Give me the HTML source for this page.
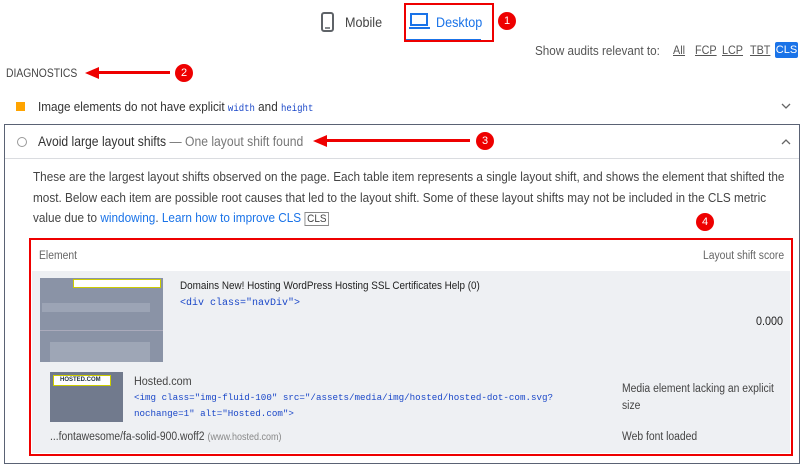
<!DOCTYPE html>
<html><head><meta charset="utf-8"><style>
*{margin:0;padding:0;box-sizing:border-box}
body{width:805px;height:470px;background:#fff;font-family:"Liberation Sans",sans-serif;color:#202124;position:relative;overflow:hidden}
.a{position:absolute;white-space:nowrap}
.n{transform:scaleX(.9);transform-origin:0 0}
.mono{font-family:"Liberation Mono",monospace;color:#1a47c8;font-size:10px}
.num{position:absolute;width:18px;height:18px;border-radius:50%;background:#e00;color:#fff;font-size:11px;text-align:center;line-height:18px}
.arr{position:absolute;height:3px;background:#e00}
.head{position:absolute;width:0;height:0;border-top:6px solid transparent;border-bottom:6px solid transparent;border-right:14px solid #e00}
.link{text-decoration:underline;color:#555;font-size:12px}
</style></head><body>
<svg class="a" style="left:321px;top:12px" width="13" height="20"><rect x="1" y="1" width="11" height="18" rx="2" fill="none" stroke="#5f6368" stroke-width="2"/><line x1="4" y1="16" x2="9" y2="16" stroke="#5f6368" stroke-width="1.5"/></svg>
<div class="a n" style="left:345px;top:14px;font-size:14px;color:#444">Mobile</div>
<svg class="a" style="left:409px;top:13px" width="21" height="17"><rect x="2" y="1" width="16" height="11" fill="none" stroke="#1a73e8" stroke-width="2"/><line x1="0" y1="15" x2="21" y2="15" stroke="#1a73e8" stroke-width="2"/></svg>
<div class="a n" style="left:436px;top:14px;font-size:14px;color:#1a73e8">Desktop</div>
<div class="a" style="left:406px;top:39px;width:75px;height:2px;background:#1a73e8"></div>
<div class="a" style="left:404px;top:3px;width:90px;height:39px;border:2px solid #e00"></div>
<div class="num" style="left:498px;top:12px">1</div>
<div class="a n" style="left:535px;top:43px;font-size:13px;color:#555">Show audits relevant to:</div>
<div class="a link n" style="left:673px;top:43px">All</div>
<div class="a link n" style="left:695px;top:43px">FCP</div>
<div class="a link n" style="left:722px;top:43px">LCP</div>
<div class="a link n" style="left:750px;top:43px">TBT</div>
<div class="a" style="left:775px;top:42px;width:23px;height:16px;background:#1a73e8;color:#fff;font-size:11px;text-align:center;line-height:16px;border-radius:2px">CLS</div>
<div class="a n" style="left:6px;top:68px;font-size:11.5px;color:#444">DIAGNOSTICS</div>
<div class="head" style="left:85px;top:67px"></div><div class="arr" style="left:97px;top:71px;width:73px"></div>
<div class="num" style="left:175px;top:64px">2</div>
<div class="a" style="left:16px;top:102px;width:9px;height:9px;background:#ffa400"></div>
<div class="a n" style="left:38px;top:99px;font-size:13px;color:#333">Image elements do not have explicit <span class="mono">width</span> and <span class="mono">height</span></div>
<svg class="a" style="left:781px;top:103px" width="10" height="7"><path d="M1 1 L5 5 L9 1" fill="none" stroke="#666" stroke-width="1.3"/></svg>
<div class="a" style="left:4px;top:124px;width:796px;height:340px;border:1px solid #5a6274"></div>
<div class="a" style="left:5px;top:158px;width:794px;height:1px;background:#dadce0"></div>
<div class="a" style="left:17px;top:137px;width:10px;height:10px;border:1.5px solid #999;border-radius:50%"></div>
<div class="a n" style="left:38px;top:134px;font-size:13.5px;color:#333">Avoid large layout shifts <span style="color:#777">— One layout shift found</span></div>
<svg class="a" style="left:781px;top:138px" width="10" height="7"><path d="M1 6 L5 2 L9 6" fill="none" stroke="#666" stroke-width="1.3"/></svg>
<div class="head" style="left:313px;top:135px"></div><div class="arr" style="left:325px;top:139px;width:145px"></div>
<div class="num" style="left:476px;top:132px">3</div>
<div class="a" style="left:33px;top:167px;font-size:13px;line-height:20.5px;color:#444;transform:scaleX(.905);transform-origin:0 0">These are the largest layout shifts observed on the page. Each table item represents a single layout shift, and shows the element that shifted the<br>most. Below each item are possible root causes that led to the layout shift. Some of these layout shifts may not be included in the CLS metric<br>value due to <span style="color:#1a73e8">windowing</span>. <span style="color:#1a73e8">Learn how to improve CLS</span> <span style="border:1px solid #888;font-size:11px;padding:0 2px">CLS</span></div>
<div class="num" style="left:696px;top:213px">4</div>
<div class="a" style="left:32px;top:271px;width:758px;height:182px;background:#eef0f3"></div>
<div class="a" style="left:29px;top:238px;width:764px;height:218px;border:2px solid #e00"></div>
<div class="a n" style="left:39px;top:250px;font-size:11.5px;color:#666">Element</div>
<div class="a n" style="left:703px;top:250px;font-size:11.5px;color:#666">Layout shift score</div>
<div class="a" style="left:40px;top:278px;width:123px;height:84px;background:#8a93a6"></div>
<div class="a" style="left:73px;top:279px;width:88px;height:9px;background:#fff;border:1px solid #cc0"></div>
<div class="a" style="left:42px;top:303px;width:108px;height:9px;background:#9ca4b5"></div>
<div class="a" style="left:40px;top:330px;width:123px;height:1px;background:#aab"></div>
<div class="a" style="left:50px;top:342px;width:100px;height:20px;background:#9ea6b6"></div>
<div class="a n" style="left:180px;top:280px;font-size:11px;color:#222">Domains New! Hosting WordPress Hosting SSL Certificates Help (0)</div>
<div class="a mono" style="left:180px;top:298px">&lt;div class="navDiv"&gt;</div>
<div class="a n" style="left:756px;top:314px;font-size:12px;color:#222">0.000</div>
<div class="a" style="left:50px;top:372px;width:73px;height:50px;background:#717a8d"></div>
<div class="a" style="left:53px;top:375px;width:58px;height:11px;background:#fff;border:1px solid #cc0;font-size:6px;font-weight:bold;color:#234;line-height:9px;padding-left:6px">HOSTED.COM</div>
<div class="a n" style="left:134px;top:374px;font-size:12px;color:#444">Hosted.com</div>
<div class="a mono" style="left:134px;top:392px;font-size:9.2px">&lt;img class="img-fluid-100" src="/assets/media/img/hosted/hosted-dot-com.svg?</div>
<div class="a mono" style="left:134px;top:408px;font-size:9.2px">nochange=1" alt="Hosted.com"&gt;</div>
<div class="a n" style="left:622px;top:383px;font-size:11.5px;color:#444">Media element lacking an explicit</div>
<div class="a n" style="left:622px;top:400px;font-size:11.5px;color:#444">size</div>
<div class="a n" style="left:50px;top:431px;font-size:11.5px;color:#444">...fontawesome/fa-solid-900.woff2 <span style="color:#888;font-size:10px">(www.hosted.com)</span></div>
<div class="a n" style="left:622px;top:431px;font-size:11.5px;color:#444">Web font loaded</div>
</body></html>
